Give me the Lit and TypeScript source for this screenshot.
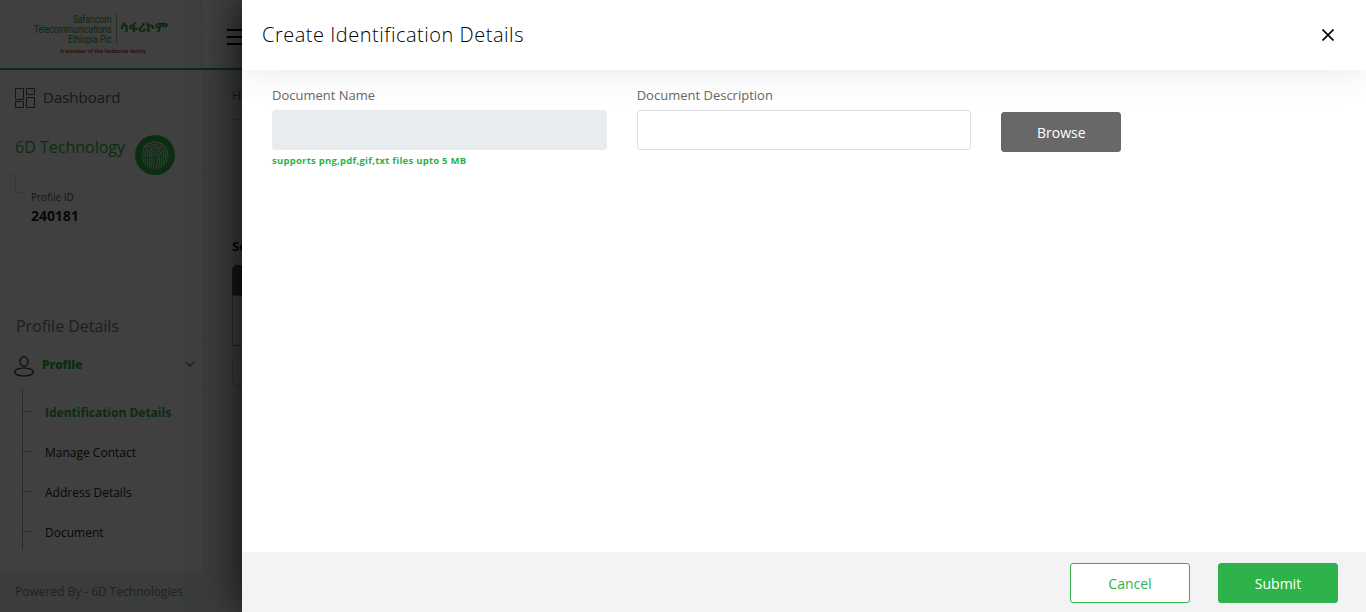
import { LitElement, html, css, svg } from "lit";
import { customElement } from "lit/decorators.js";

@customElement("side-logo")
class SideLogo extends LitElement {
  static styles = css`
    :host { display: block; width: 140px; height: 46px; }
    svg { display: block; }
    text { font-family: Roboto, "Liberation Sans", sans-serif; }
    .name { fill: #1f9e3c; font-size: 10.5px; }
    .am { font-family: "Noto Sans Ethiopic", "Noto Sans", sans-serif; font-weight: bold; font-size: 12.5px; fill: #1f9e3c; }
    .tag { font-family: "Liberation Sans", sans-serif; font-size: 5.2px; font-weight: bold; fill: #d02020; }
  `;
  render() {
    return html`<svg width="140" height="46" viewBox="0 0 140 46">
      <text class="name" x="39" y="12.5" textLength="38.5" lengthAdjust="spacingAndGlyphs">Safaricom</text>
      <text class="name" x="0" y="22.7" textLength="77.5" lengthAdjust="spacingAndGlyphs">Telecommunications</text>
      <text class="name" x="34" y="33" textLength="43.5" lengthAdjust="spacingAndGlyphs">Ethiopia Plc</text>
      <path d="M82.5 4v30" stroke="#2db34a" stroke-width=".7" />
      <text class="am" x="86" y="22" textLength="48" lengthAdjust="spacingAndGlyphs">ሳፋሪኮም</text>
      <text class="tag" x="26" y="43" textLength="86" lengthAdjust="spacing">A member of the Vodacom family</text>
    </svg>`;
  }
}

@customElement("side-nav")
class SideNav extends LitElement {
  static styles = css`
    :host { display: flex; flex-direction: column; width: 202px; flex: none; background: #fff; color: #555; }
    .dash { display: flex; align-items: center; height: 54px; padding-left: 15px; gap: 8px; font-size: 15px; line-height: 22px; color: #666; }
    .dash svg { margin-top: 2px; }
    .account { box-sizing: border-box; display: flex; height: 51px; padding: 11px 0 0 15px; gap: 10px; border-bottom: 1px solid #eee; font-size: 16px; line-height: 24px; color: #2db34a; white-space: nowrap; }
    .account svg { flex: none; }
    .account span { width: 110px; }
    .pid { display: flex; height: 132px; padding-left: 15px; }
    .elbow { box-sizing: border-box; width: 11px; height: 18px; border-left: 1px solid #ddd; border-bottom: 1px solid #ddd; margin-right: 5px; }
    .pid-text { padding-top: 15px; }
    .small { font-size: 10px; line-height: 14px; }
    .value { font-size: 14px; line-height: 18px; margin-top: 3px; font-weight: 700; letter-spacing: -.05px; color: #222; }
    .heading { box-sizing: border-box; height: 33px; padding: 7px 0 0 16px; font-size: 16px; line-height: 24px; letter-spacing: -.02px; color: #777; border-bottom: 1px solid #eee; }
    .profile { box-sizing: border-box; display: flex; align-items: center; height: 50px; padding: 0 7px 0 14px; border-bottom: 1px solid #eee; font-size: 12px; font-weight: 700; letter-spacing: -.1px; color: #2db34a; }
    .profile b { flex: 1; margin-left: 8px; }
    .profile .person { margin-top: 3px; }
    .tree { margin-left: 22px; height: 160px; border-left: 1px solid #aaa; font-size: 12px; color: #222; }
    .item { display: flex; height: 40px; line-height: 17px; }
    .item i { width: 9px; height: 1px; margin: 21px 13px 0 0; background: #bbb; }
    .item span { padding-top: 14px; }
    .item.on { color: #2db34a; font-weight: 700; }
    .fill { flex: 1; }
    .foot { height: 40px; line-height: 40px; padding-left: 15px; font-size: 12px; letter-spacing: -.02px; color: #888; background: #e9edef; }
  `;
  render() {
    const ridges = [1.5, 3.7, 5.9, 8.1, 10.3, 12.5];
    return html`
      <div class="dash">
        <svg width="20" height="20" fill="none" stroke="#555"><path d="M.5.5h8v11h-8zM11.5.5h8v6h-8zM.5 13.5h8v6h-8zM11.5 9.5h8v10h-8z" /></svg>
        <span>Dashboard</span>
      </div>
      <div class="account">
        <span>6D Technology</span>
        <svg width="40" height="40">
          <clipPath id="c"><circle cx="20" cy="20" r="14" /></clipPath>
          <circle cx="20" cy="20" r="20" fill="#2db34a" />
          <g clip-path="url(#c)" fill="none" stroke="#dbe8dc" stroke-width="1.05" stroke-dasharray="13 .8 9 .8">
            ${ridges.map((r) => svg`<path d="M${19 - r} 36q3-8 1-16a${r} ${r} 0 0 1 ${2 * r} -1q2 8-1 17" />`)}
            <path d="M8 13q12-12 24 0" />
          </g>
        </svg>
      </div>
      <div class="pid">
        <div class="elbow"></div>
        <div class="pid-text"><div class="small">Profile ID</div><div class="value">240181</div></div>
      </div>
      <div class="heading">Profile Details</div>
      <div class="profile">
        <svg class="person" width="20" height="21" fill="none" stroke="#222" stroke-width="1.2"><ellipse cx="10" cy="5.5" rx="4" ry="4.9" /><ellipse cx="10" cy="16" rx="9.4" ry="4" /></svg>
        <b>Profile</b>
        <svg width="10" height="7" fill="none" stroke="#2db34a" stroke-width="1.5"><path d="M1 1l4 4 4-4" /></svg>
      </div>
      <div class="tree">
        ${["Identification Details", "Manage Contact", "Address Details", "Document"].map(
          (t, i) => html`<div class="item ${i === 0 ? "on" : ""}"><i></i><span>${t}</span></div>`
        )}
      </div>
      <div class="fill"></div>
      <div class="foot">Powered By - 6D Technologies</div>
    `;
  }
}

@customElement("create-drawer")
class CreateDrawer extends LitElement {
  static styles = css`
    :host { display: flex; flex-direction: column; background: #fff; box-shadow: 0 0 40px rgba(0, 0, 0, .8); }
    header { box-sizing: border-box; flex: none; height: 70px; display: flex; justify-content: space-between; align-items: center; padding: 0 32px 0 20px; box-shadow: 0 0 40px rgba(0, 0, 0, .1); }
    h1 { margin: -1px 0 0; font-size: 20px; line-height: 26px; font-weight: 300; letter-spacing: .52px; color: #000; }
    main { flex: 1; display: flex; gap: 30px; align-items: flex-start; padding: 16px 30px; }
    .field { width: 334.7px; font-size: 13px; line-height: 18px; color: #666; }
    .box { box-sizing: border-box; height: 40px; margin-top: 6px; border: 1px solid #dedfe1; border-radius: 3px; background: #fff; }
    .box.off { background: #e8ecef; border-color: #e8ecef; }
    .hint { margin-top: 4px; font-size: 9.5px; line-height: 14px; letter-spacing: .25px; font-weight: 700; color: #2db34a; }
    button { box-sizing: border-box; width: 120px; height: 40px; padding: 1px 0 0; border: 1px solid #2db34a; border-radius: 3px; font: 14px/20px "Open Sans", sans-serif; color: #fff; background: #2db34a; }
    .browse { margin-top: 26px; background: #686868; border-color: #686868; }
    .cancel { background: #fff; color: #2db34a; }
    footer { flex: none; display: flex; height: 60px; gap: 28px; align-items: center; justify-content: flex-end; box-sizing: border-box; padding: 2px 28px 0 0; background: #f3f3f5; }
  `;
  render() {
    return html`
      <header>
        <h1>Create Identification Details</h1>
        <svg width="12" height="12" stroke="#000" stroke-width="1.6"><path d="M.5.5l11 11M11.5.5l-11 11" /></svg>
      </header>
      <main>
        <div class="field"><div>Document Name</div><div class="box off"></div><div class="hint">supports png,pdf,gif,txt files upto 5 MB</div></div>
        <div class="field"><div>Document Description</div><div class="box"></div></div>
        <button class="browse">Browse</button>
      </main>
      <footer><button class="cancel">Cancel</button><button>Submit</button></footer>
    `;
  }
}

@customElement("app-root")
class AppRoot extends LitElement {
  static styles = css`
    :host { display: block; position: relative; height: 612px; overflow: hidden; font-family: "Open Sans", sans-serif; }
    .page { display: flex; flex-direction: column; height: 612px; background: #eee; }
    .top { box-sizing: border-box; display: flex; height: 70px; flex: none; background: #fff; border-bottom: 2px solid #2db34a; }
    .brand { box-sizing: border-box; width: 202px; padding: 10px 0 0 34px; border-right: 1px solid #ddd; }
    .burger { display: flex; flex-direction: column; gap: 5px; padding: 29px 0 0 25px; }
    .burger i { width: 22px; height: 2px; background: #000; }
    .body { flex: 1; display: flex; min-height: 0; }
    .content { flex: 1; padding: 15px 30px 0; font-size: 12px; color: #666; overflow: hidden; }
    .crumb { height: 34px; line-height: 22px; border-bottom: 1px solid #ccc; }
    .card { box-sizing: border-box; height: 59px; margin-top: 20px; border: 1px solid #dedede; border-radius: 4px; }
    .title { margin-top: 37px; font-size: 13px; line-height: 20px; font-weight: 700; color: #111; }
    .thead { height: 30px; margin-top: 9px; background: #555; border-radius: 5px 5px 0 0; }
    .row { box-sizing: border-box; height: 51px; border: 1px solid #999; background: #f2f2f2; }
    .pager { box-sizing: border-box; height: 30px; margin-top: 10px; border: 1px solid #c8c8c8; border-radius: 4px; }
    .shade { position: absolute; inset: 0; background: rgba(0, 0, 0, .75); }
    create-drawer { position: absolute; inset: 0 0 0 242px; }
  `;
  render() {
    return html`
      <div class="page">
        <div class="top">
          <div class="brand"><side-logo></side-logo></div>
          <div class="burger"><i></i><i></i><i></i></div>
        </div>
        <div class="body">
          <side-nav></side-nav>
          <div class="content">
            <div class="crumb">Home</div>
            <div class="card"></div>
            <div class="title">Search</div>
            <div class="thead"></div>
            <div class="row"></div>
            <div class="pager"></div>
          </div>
        </div>
      </div>
      <div class="shade"></div>
      <create-drawer></create-drawer>
    `;
  }
}
